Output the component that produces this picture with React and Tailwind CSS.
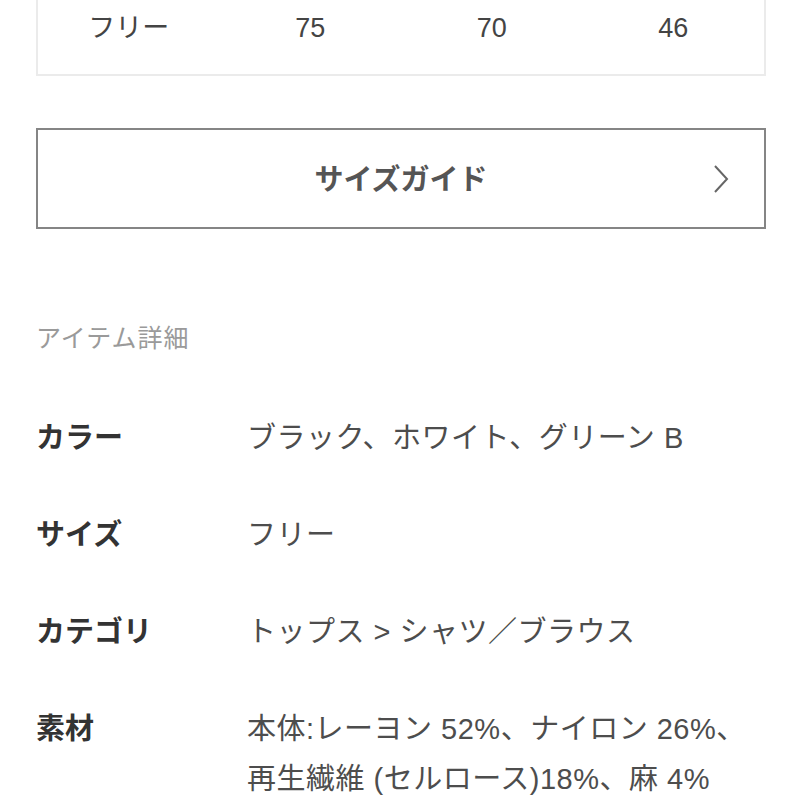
import React from 'react';

const details = [
    { label: 'カラー', lines: ['ブラック、ホワイト、グリーン B'] },
    { label: 'サイズ', lines: ['フリー'] },
    { label: 'カテゴリ', lines: ['トップス > シャツ／ブラウス'] },
    { label: '素材', lines: ['本体:レーヨン 52%、ナイロン 26%、', '再生繊維 (セルロース)18%、麻 4%'] },
];

const sizeRow = ['フリー', '75', '70', '46'];

const App = () => {
    return (
        <div
            className="w-[802px] h-[802px] overflow-hidden bg-white px-[36px]"
            style={{ fontFamily: '"Liberation Sans", "Noto Sans CJK JP", sans-serif' }}
        >
            {/* Size table (bottom row) */}
            <div className="border-x-2 border-b-2 border-[#ebebeb] h-[76px]">
                <div className="grid grid-cols-4 h-[56px] items-center text-[27px] text-[#444]">
                    {sizeRow.map((v, i) => (
                        <div key={i} className="text-center">{v}</div>
                    ))}
                </div>
            </div>

            {/* Size guide button */}
            <div className="mt-[52px] h-[101px] pt-[4px] border-2 border-[#858585] relative flex items-center justify-center">
                <span className="text-[29px] font-bold text-[#555]">サイズガイド</span>
                <svg
                    className="absolute right-[34px] top-1/2 -translate-y-1/2"
                    width="18"
                    height="30"
                    viewBox="0 0 18 30"
                    fill="none"
                >
                    <path d="M3 2 L15 15 L3 28" stroke="#666" strokeWidth="2" />
                </svg>
            </div>

            {/* Item details */}
            <div className="mt-[91px] text-[25px] leading-[36px] tracking-[1px] text-[#9a9a9a]">アイテム詳細</div>

            <div className="mt-[57px] flex flex-col gap-[47px]">
                {details.map((d) => (
                    <div key={d.label} className="flex">
                        <div className="w-[211px] shrink-0 text-[29px] leading-[50px] font-bold text-[#333]">
                            {d.label}
                        </div>
                        <div className="text-[29px] leading-[50px] tracking-[0.5px] text-[#4d4d4d]">
                            {d.lines.map((l) => (
                                <div key={l} className="whitespace-nowrap">{l}</div>
                            ))}
                        </div>
                    </div>
                ))}
            </div>
        </div>
    );
};

export default App;
